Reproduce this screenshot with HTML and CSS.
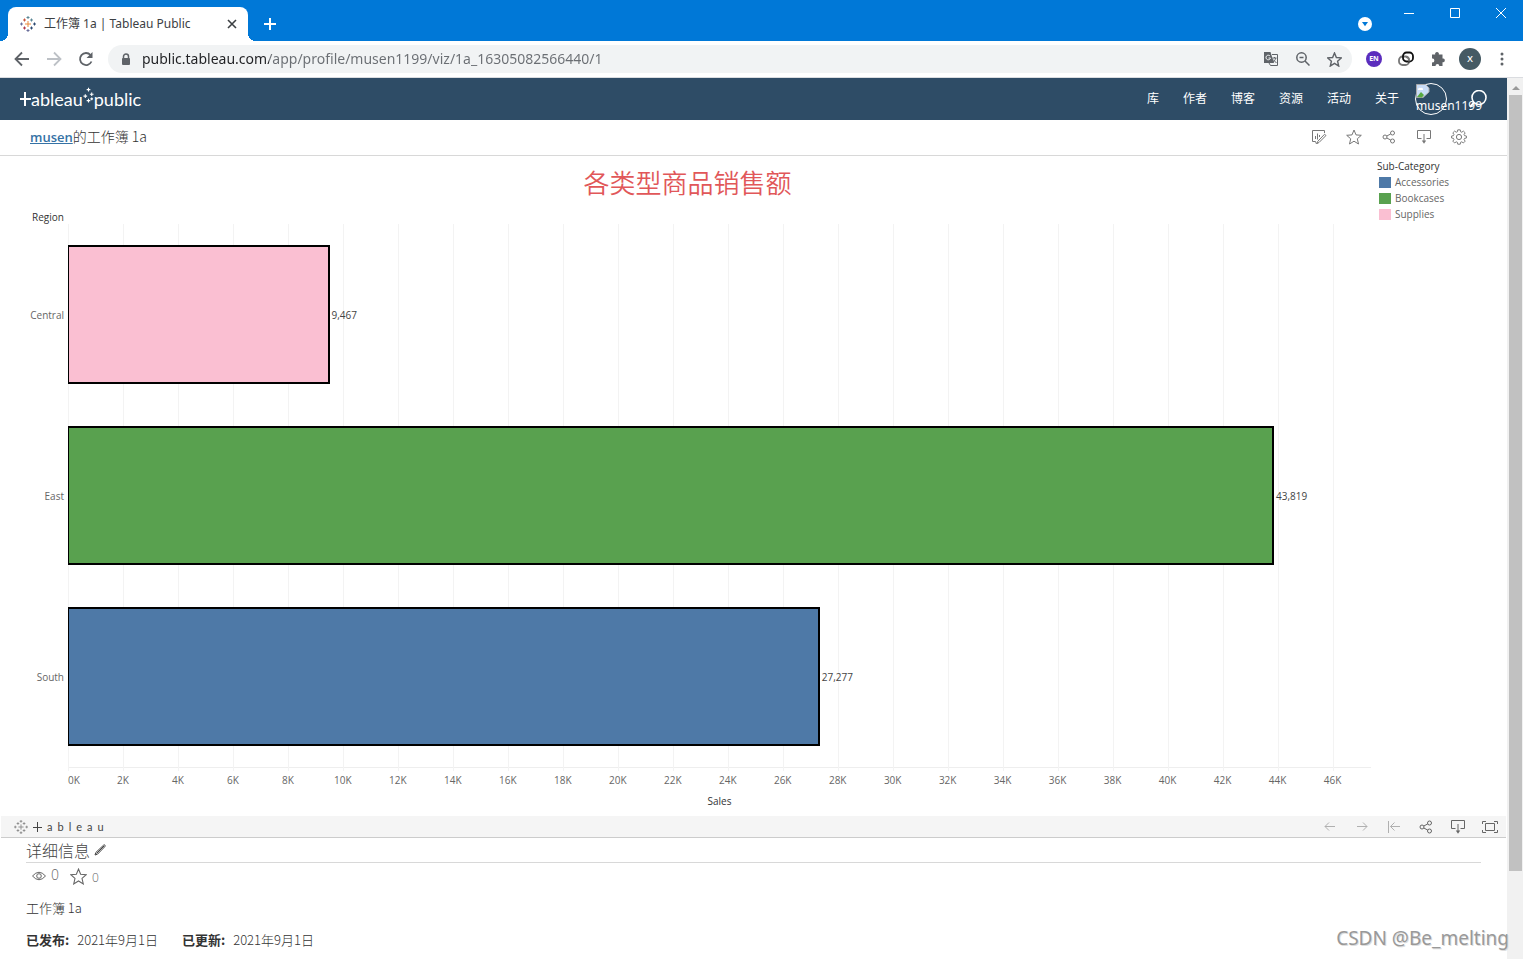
FILE: index.html
```html
<!DOCTYPE html>
<html lang="zh-CN">
<head>
<meta charset="utf-8">
<title>工作簿 1a | Tableau Public</title>
<link rel="stylesheet" href="styles.css">
</head>
<body>
<svg class="defs" width="0" height="0" aria-hidden="true">
  <symbol id="spark" viewBox="0 0 16 16"><path d="M8 5v6M5 8h6M4.500 2.500v3M3 4h3M11.500 2.500v3M10 4h3M4.500 10.500v3M3 12h3M11.500 10.500v3M10 12h3M8 0v3M6.500 1.500h3M8 13v3M6.500 14.500h3M1.500 6.500v3M0 8h3M14.500 6.500v3M13 8h3"/></symbol>
  <symbol id="star" viewBox="0 0 16 16"><path d="M8 1l2 4.900 5.300.400-4 3.500 1.200 5.200L8 12.200 3.500 15l1.200-5.200-4-3.500L6 5.900z"/></symbol>
  <symbol id="share" viewBox="0 0 14 14"><circle cx="3" cy="7" r="2"/><circle cx="10.500" cy="3" r="2"/><circle cx="10.500" cy="11" r="2"/><path d="M4.800 6l4-2.100M4.800 8l4 2.100"/></symbol>
  <symbol id="download" viewBox="0 0 14 14"><path d="M4.500 8.500H.500v-8h13v8h-4M7 4v8"/><path class="solid" d="M4.800 10.500h4.400L7 13.800z"/></symbol>
</svg>

<header class="tabs">
  <div class="tab">
    <svg class="tab-logo" width="16" height="16" viewBox="0 0 16 16"><path stroke="#eb8a3c" d="M8 5v6M5 8h6"/><path stroke="#c8553d" d="M4.500 2.500v3M3 4h3"/><path stroke="#5b8796" d="M11.500 2.500v3M10 4h3M8 0v3M6.500 1.500h3"/><path stroke="#b3384a" d="M4.500 10.500v3M3 12h3"/><path stroke="#2f4b73" d="M11.500 10.500v3M10 12h3M14.500 6.500v3M13 8h3"/><path stroke="#6b6f9b" d="M8 13v3M6.500 14.500h3M1.500 6.500v3M0 8h3"/></svg>
    <span class="tab-title">工作簿 1a | Tableau Public</span>
    <button class="icon-btn tab-close" aria-label="Close tab"><svg width="10" height="10" viewBox="0 0 10 10"><path d="M1 1l8 8M9 1L1 9"/></svg></button>
  </div>
  <button class="icon-btn new-tab" aria-label="New tab"><svg width="12" height="12" viewBox="0 0 12 12"><path d="M6 0v12M0 6h12"/></svg></button>
  <div class="window-tools">
    <button class="icon-btn tab-search" aria-label="Search tabs"><svg width="14" height="14" viewBox="0 0 14 14"><circle cx="7" cy="7" r="7" fill="#fff"/><path d="M4 5h6L7 9.200z" fill="#0078d7"/></svg></button>
    <button class="icon-btn" aria-label="Minimize"><svg width="10" height="10" viewBox="0 0 10 10"><path d="M0 5.500h10"/></svg></button>
    <button class="icon-btn" aria-label="Maximize"><svg width="10" height="10" viewBox="0 0 10 10"><path d="M.500.500h9v9h-9z"/></svg></button>
    <button class="icon-btn" aria-label="Close"><svg width="10" height="10" viewBox="0 0 10 10"><path d="M0 0l10 10M10 0L0 10"/></svg></button>
  </div>
</header>

<div class="toolbar">
  <button class="icon-btn" aria-label="Back"><svg width="16" height="16" viewBox="0 0 16 16"><path d="M15 8H2M8 1.500L1.500 8 8 14.500"/></svg></button>
  <button class="icon-btn faded" aria-label="Forward"><svg width="16" height="16" viewBox="0 0 16 16"><path d="M1 8h13M8 1.500L14.500 8 8 14.500"/></svg></button>
  <button class="icon-btn" aria-label="Reload"><svg width="16" height="16" viewBox="0 0 16 16"><path d="M13.500 10.500A6 6 0 1 1 12.500 4"/><path class="solid" d="M14.500 1v6H8.500z"/></svg></button>
  <div class="address">
    <svg width="10" height="13" viewBox="0 0 10 13"><path d="M2.500 6V3.500a2.500 2.500 0 0 1 5 0V6"/><rect class="solid" x="1" y="5" width="8" height="7" rx="1"/></svg>
    <input class="url" type="text" aria-label="Address" value="public.tableau.com/app/profile/musen1199/viz/1a_16305082566440/1">
    <button class="icon-btn" aria-label="Translate"><svg width="16" height="16" viewBox="0 0 16 16"><path class="thin" d="M9 3.500h5.500v11H7.500L6 12"/><path class="solid" d="M1 1h6.500l3.500 11H1z"/><path stroke="#f1f3f4" class="thin" d="M7 5a2.300 2.300 0 1 0 .500 2H5.500"/><path class="thin" d="M9.500 7h4M11.500 6v1M12.800 7c-.500 2-1.500 3-2.800 4M10 8.500l3.500 3.500"/></svg></button>
    <button class="icon-btn" aria-label="Zoom"><svg width="14" height="14" viewBox="0 0 14 14"><circle cx="5.500" cy="5.500" r="4.700"/><path d="M9 9l4.500 4.500M3.500 5.500h4"/></svg></button>
    <button class="icon-btn" aria-label="Bookmark"><svg width="15" height="15"><use href="#star"/></svg></button>
  </div>
  <button class="badge" aria-label="Language EN">EN</button>
  <button class="icon-btn" aria-label="Links extension"><svg width="16" height="16" viewBox="0 0 16 16"><rect x="1" y="5.500" width="10" height="8.500" rx="3.500" stroke="#777"/><rect x="5" y="1.500" width="10" height="9" rx="3.500" stroke="#111"/><path stroke="#777" d="M8 6a3 3 0 0 1 3 3v1.500"/></svg></button>
  <button class="icon-btn" aria-label="Extensions"><svg width="16" height="16" viewBox="0 0 16 16"><path class="solid" d="M2 3.500h3.200a1.900 1.900 0 1 1 3.600 0H12.500v4a1.900 1.900 0 1 1 0 3.700V15H9.300a1.900 1.900 0 1 0-3.800 0H2v-3.700a1.900 1.900 0 1 0 0-3.700z"/></svg></button>
  <button class="profile" aria-label="Profile">X</button>
  <button class="icon-btn" aria-label="Menu"><svg width="4" height="14" viewBox="0 0 4 14"><g class="solid"><circle cx="2" cy="2" r="1.500"/><circle cx="2" cy="7" r="1.500"/><circle cx="2" cy="12" r="1.500"/></g></svg></button>
</div>

<div class="viewport">
  <main class="page">
    <nav class="site-nav">
      <a class="brand" href="#" aria-label="Tableau Public">
        <svg width="11" height="16" viewBox="0 0 11 16"><path stroke-width="2" d="M5 1v14M0 8h11"/></svg><span>ableau</span><svg width="11" height="22" viewBox="0 0 12 22"><path stroke-width="1.200" d="M6 1v4M4 3h4M2.500 8v4M.500 10h4M9.500 6v4M7.500 8h4M6 13v4M4 15h4M9.500 11.500v3M8 13h3"/></svg><span>public</span>
      </a>
      <div class="links">
        <a href="#">库</a><a href="#">作者</a><a href="#">博客</a><a href="#">资源</a><a href="#">活动</a><a href="#">关于</a>
      </div>
      <a class="avatar" href="#">
        <svg width="14" height="14" viewBox="0 0 14 14"><path fill="#c9dcf6" stroke="#aaa" d="M.500.500h9l3.500 3.500v4l-6 5.500H.500z"/><path fill="#fff" stroke="none" d="M2 5q1-2 3-1 2-1 2 2H2z"/><path fill="#58a840" stroke="none" d="M1 13l4-5 3 3-2 2.500z"/></svg>
        <span>musen1199</span>
      </a>
      <button class="icon-btn search" aria-label="搜索"><svg width="18" height="18" viewBox="0 0 18 18"><circle cx="10" cy="7.500" r="7"/><path stroke-width="2" d="M5 12.500L1 17"/></svg></button>
    </nav>

    <div class="viz-head">
      <h1><a href="#">musen</a>的<span>工作簿 1a</span></h1>
      <div class="actions">
        <button class="icon-btn" aria-label="编辑"><svg width="16" height="16" viewBox="0 0 16 16"><path d="M13.500 4V1.500h-12v11h3l1 2.500M4.500 10V7M6.500 10.500V4.500M8.500 8V6M15 6.500L8 13.500l-2 1 .800-2.200 6.700-7z"/></svg></button>
        <button class="icon-btn" aria-label="收藏"><svg width="16" height="16"><use href="#star"/></svg></button>
        <button class="icon-btn" aria-label="共享"><svg width="14" height="14"><use href="#share"/></svg></button>
        <button class="icon-btn" aria-label="下载"><svg width="14" height="14"><use href="#download"/></svg></button>
        <button class="icon-btn" aria-label="设置"><svg width="16" height="16" viewBox="0 0 16 16"><circle cx="8" cy="8" r="2.600"/><path d="M6.700 1h2.600l.400 2 1.200.500 1.700-1.200 1.900 1.900-1.200 1.700.500 1.200 2 .400v2.100l-2 .400-.500 1.200 1.200 1.700-1.900 1.900-1.700-1.200-1.200.500-.400 2H6.700l-.400-2-1.200-.500-1.700 1.200-1.900-1.900 1.200-1.700L2.200 10l-2-.400V7.500l2-.400.500-1.200-1.200-1.700 1.900-1.900 1.700 1.200L6.300 3z" transform="translate(.4 -.1) scale(.95)"/></svg></button>
      </div>
    </div>

    <section class="viz">
      <div class="chart">
        <h2>各类型商品销售额</h2>
        <div class="field">Region</div>
        <div class="row-labels"><span>Central</span><span>East</span><span>South</span></div>
        <div class="plot">
          <div class="gridlines"><i></i><i></i><i></i><i></i><i></i><i></i><i></i><i></i><i></i><i></i><i></i><i></i><i></i><i></i><i></i><i></i><i></i><i></i><i></i><i></i><i></i><i></i><i></i><i></i></div>
          <div class="bars">
            <div class="row"><div class="bar pink" style="width:20.070%"></div><span>9,467</span></div>
            <div class="row"><div class="bar green" style="width:92.560%"></div><span>43,819</span></div>
            <div class="row"><div class="bar blue" style="width:57.700%"></div><span>27,277</span></div>
          </div>
        </div>
        <div class="ticks"><span>0K</span><span>2K</span><span>4K</span><span>6K</span><span>8K</span><span>10K</span><span>12K</span><span>14K</span><span>16K</span><span>18K</span><span>20K</span><span>22K</span><span>24K</span><span>26K</span><span>28K</span><span>30K</span><span>32K</span><span>34K</span><span>36K</span><span>38K</span><span>40K</span><span>42K</span><span>44K</span><span>46K</span></div>
        <div class="axis-title">Sales</div>
      </div>
      <aside class="legend">
        <h3>Sub-Category</h3>
        <ul>
          <li><i class="blue"></i>Accessories</li>
          <li><i class="green"></i>Bookcases</li>
          <li><i class="pink"></i>Supplies</li>
        </ul>
      </aside>
    </section>

    <div class="viz-bar">
      <a class="mark" href="#" aria-label="Tableau"><svg width="14" height="14"><use href="#spark"/></svg><svg width="9" height="10" viewBox="0 0 9 10"><path d="M4.500 0v10M0 5.500h9"/></svg><span>a</span><span>b</span><span>l</span><span>e</span><span>a</span><span>u</span></a>
      <div class="bar-tools">
        <button class="icon-btn faded" aria-label="撤消"><svg width="12" height="12" viewBox="0 0 12 12"><path d="M11 5.500H1M5 1.500l-4 4 4 4"/></svg></button>
        <button class="icon-btn faded" aria-label="重做"><svg width="12" height="12" viewBox="0 0 12 12"><path d="M1 5.500h10M7 1.500l4 4-4 4"/></svg></button>
        <button class="icon-btn faded" aria-label="还原"><svg width="12" height="12" viewBox="0 0 12 12"><path d="M.500 0v12M12 5.500H2.500M6.500 1.500l-4 4 4 4"/></svg></button>
        <button class="icon-btn" aria-label="共享"><svg width="14" height="14"><use href="#share"/></svg></button>
        <button class="icon-btn" aria-label="下载"><svg width="14" height="14"><use href="#download"/></svg></button>
        <button class="icon-btn" aria-label="全屏"><svg width="16" height="12" viewBox="0 0 16 12"><path d="M3.500 2.500h9v7h-9zM.500 3V.500H4M12 .500h3.500V3M15.500 9v2.500H12M4 11.500H.500V9"/></svg></button>
      </div>
    </div>

    <section class="details">
      <h2>详细信息 <svg width="12" height="12" viewBox="0 0 12 12"><path d="M1 11l.800-2.500L9.500 1.200q1-.700 1.500 0t-.200 1.500L3.500 10.200zM2.500 9.500L10 2"/></svg></h2>
      <div class="counts">
        <svg width="14" height="10" viewBox="0 0 14 10"><path d="M.500 5Q7-2.500 13.500 5 7 12.500.500 5z"/><circle cx="7" cy="5" r="2.300"/></svg>
        <span class="views">0</span>
        <svg width="17" height="17"><use href="#star"/></svg>
        <span class="likes">0</span>
      </div>
      <p>工作簿 1a</p>
      <dl><dt>已发布:</dt><dd>2021年9月1日</dd><dt>已更新:</dt><dd>2021年9月1日</dd></dl>
    </section>
  </main>
  <div class="scrollbar"><svg width="8" height="4" viewBox="0 0 8 4"><path d="M0 4l4-4 4 4z"/></svg><div class="thumb"></div><div class="track"></div></div>
</div>
<div class="watermark">CSDN @Be_melting</div>
</body>
</html>
```
FILE: styles.css
```css
* { box-sizing: border-box; }
body {
  margin: 0; min-height: 100vh; display: flex; flex-direction: column;
  font: 12px/16px "Open Sans", "Noto Sans CJK SC", sans-serif;
  color: #333; background: #fff; position: relative;
}
h1, h2, h3, p, ul, dl, dd { margin: 0; padding: 0; font-weight: 400; }
a { color: inherit; text-decoration: none; }
svg { display: block; flex: none; fill: none; stroke: currentColor; }
.defs { position: absolute; }
.solid { fill: currentColor; stroke: none; }
button { font: inherit; color: inherit; border: 0; padding: 0; background: none; }
.icon-btn { display: flex; align-items: center; justify-content: center; flex: none; }

.tabs { display: flex; height: 41px; padding: 7px 0 0 8px; background: #0078d7; color: #fff; }
.tab {
  position: relative; display: flex; align-items: center; width: 240px; padding: 0 11px 0 12px;
  background: #fff; color: #3c4043; border-radius: 8px 8px 0 0;
}
.tab::before, .tab::after {
  content: ""; position: absolute; bottom: 0; width: 8px; height: 8px;
}
.tab::before { left: -8px; background: radial-gradient(circle at 0 0, #0078d7 8px, #fff 8px); }
.tab::after { right: -8px; background: radial-gradient(circle at 100% 0, #0078d7 8px, #fff 8px); }
.tab-title { flex: 1; margin-left: 8px; font-family: "Noto Sans", "Noto Sans CJK SC", sans-serif; }
.tab-close svg { stroke-width: 1.6; }
.new-tab { width: 44px; }
.new-tab svg { stroke-width: 2; }
.window-tools { display: flex; align-items: flex-start; margin-left: auto; }
.window-tools .icon-btn { width: 46px; height: 12px; }
.window-tools .icon-btn:last-child { width: 45px; }
.window-tools .tab-search { width: 40px; height: 34px; margin-right: 1px; }
.tab-search svg { stroke: none; }

.toolbar {
  display: flex; align-items: center; gap: 16px; height: 37px; padding: 0 19px 0 14px;
  border-bottom: 1px solid #dadce0; color: #5f6368;
}
.toolbar svg { stroke-width: 1.8; }
.toolbar .address svg { stroke-width: 1.5; }
.toolbar svg .thin { stroke-width: 1; }
.toolbar .faded { color: #bdc1c6; }
.address {
  flex: 1; display: flex; align-items: center; gap: 17px; height: 28px; padding: 0 10px 0 13px;
  margin: 0 -2px; border-radius: 14px; background: #f1f3f4;
}
.url {
  flex: 1; min-width: 0; height: 24px; margin-left: -6px; padding: 0; border: 0; outline: 0;
  font: 14px/24px "Noto Sans", sans-serif; color: transparent;
  background: linear-gradient(90deg, #202124 127px, #6a6e73 127px); -webkit-background-clip: text; background-clip: text;
}
.badge { width: 16px; height: 16px; border-radius: 50%; background: #5b2dbd; color: #fff; font-size: 7px; font-weight: 700; }
.profile { width: 22px; height: 22px; margin: 0 3px 0 -3px; border-radius: 50%; background: #455a64; color: #fff; font-size: 9px; font-weight: 600; }

.viewport { flex: 1; display: flex; }
.page { flex: 1; min-width: 0; display: flex; flex-direction: column; }
.scrollbar { width: 16px; padding: 8px 1px 0 2px; display: flex; flex-direction: column; align-items: center; background: #f1f1f1; }
.scrollbar svg { fill: #999; stroke: none; margin-bottom: 5px; }
.thumb { flex: 776; width: 100%; background: #c1c1c1; }
.track { flex: 88; }

.site-nav { display: flex; align-items: center; height: 42px; padding: 0 20px; background: #2e4c66; color: #fff; }
.brand { display: flex; align-items: center; font: 18px/24px Lato, sans-serif; }
.brand svg:nth-of-type(2) { margin-bottom: 4px; }
.links { display: flex; gap: 24px; margin: 0 16px 2px auto; font: 12px/16px "Noto Sans CJK SC", sans-serif; }
.avatar { position: relative; width: 32px; height: 32px; margin-right: 22px; border: 1px solid #fff; border-radius: 50%; }
.avatar span { position: absolute; left: 0; top: 14px; font: 12px/16px "Noto Sans", sans-serif; }
.search svg { stroke-width: 1.6; }

.viz-head { display: flex; align-items: center; justify-content: space-between; height: 36px; padding: 0 40px 2px 30px; border-bottom: 1px solid #d8d8d8; }
.viz-head h1 { font: 300 14px/20px "Noto Sans CJK SC", sans-serif; color: #333; }
.viz-head h1 a { font: 600 13px/20px "Open Sans", sans-serif; color: #3572a5; text-decoration: underline; }
.actions { display: flex; gap: 19px; color: #777; }
.actions .icon-btn { width: 16px; }

.viz { flex: 1; display: grid; grid-template-columns: 1fr 136px; font-size: 10px; line-height: 16px; color: #666; }
.chart { display: grid; grid-template-columns: 68px 1fr; grid-template-rows: 53px 15px 1fr 24px 24px; }
.chart h2 { grid-column: 1 / 3; padding-left: 4px; text-align: center; font: 350 26px/52px "Noto Sans CJK SC", sans-serif; color: #e15759; }
.field { grid-column: 1 / 3; padding-left: 32px; color: #333; }
.row-labels { display: grid; grid-template-rows: repeat(3, 1fr); align-items: center; text-align: right; padding-right: 4px; }
.plot { display: grid; border-bottom: 1px solid #eee; }
.gridlines, .bars { grid-area: 1 / 1; }
.gridlines, .ticks { display: grid; grid-template-columns: repeat(23, 20fr) 14fr; }
.gridlines { margin-bottom: -4px; }
.gridlines i { border-left: 1px solid #f3f3f3; }
.bars { display: grid; grid-template-rows: repeat(3, 1fr); z-index: 1; }
.row { display: flex; align-items: center; color: #444; }
.row span { margin-left: 2px; }
.bar { height: 77%; border: 2px solid #000; border-left-width: 1px; }
.blue { background: #4e79a7; }
.green { background: #59a14f; }
.pink { background: #fabfd2; }
.ticks { grid-column: 2; padding-top: 4px; }
.ticks span { width: 40px; margin-left: -20px; text-align: center; }
.ticks span:first-child { margin-left: 0; text-align: left; }
.axis-title { grid-column: 2; text-align: center; line-height: 18px; color: #333; }
.legend { padding: 2px 6px; }
.legend h3 { font-size: 10px; line-height: 16px; color: #333; }
.legend ul { list-style: none; }
.legend li { display: flex; align-items: center; gap: 4px; height: 16px; margin-left: 2px; }
.legend i { width: 12px; height: 11px; }

.viz-bar { display: flex; align-items: center; justify-content: space-between; height: 22px; margin: 0 1px; padding: 0 8px 0 13px; background: #f5f5f5; border-bottom: 1px solid #ccc; color: #666; }
.mark { display: flex; align-items: center; gap: 5px; font: 11px/16px Lato, sans-serif; color: #444; }
.mark svg:first-child { color: #888; }
.bar-tools { display: flex; gap: 16px; }
.bar-tools .icon-btn { width: 16px; }
.bar-tools .faded { color: #b0b0b0; }

.details { padding: 0 26px; font: 350 13px/20px "Noto Sans CJK SC", sans-serif; color: #333; }
.details h2 { display: flex; align-items: center; gap: 4px; height: 25px; border-bottom: 1px solid #d8d8d8; font: 300 16px/24px "Noto Sans CJK SC", sans-serif; color: #444; }
.counts { display: flex; align-items: center; height: 26px; padding-left: 6px; color: #666; font-family: "Open Sans", sans-serif; }
.views { margin: 0 11px 2px 5px; font-size: 14px; }
.likes { margin: 4px 0 0 5px; font-size: 12px; }
.details p { padding: 9px 0 12px; font-weight: 300; }
.details dl { display: flex; padding-bottom: 9px; }
.details dt { margin-right: 8px; font-weight: 700; }
.details dd { margin-right: 24px; font-weight: 300; }

.watermark { position: absolute; right: 14px; bottom: 7px; font: 19px/28px "Noto Sans", sans-serif; color: #999; text-shadow: 1px 1px 0 #ddd; }
```
